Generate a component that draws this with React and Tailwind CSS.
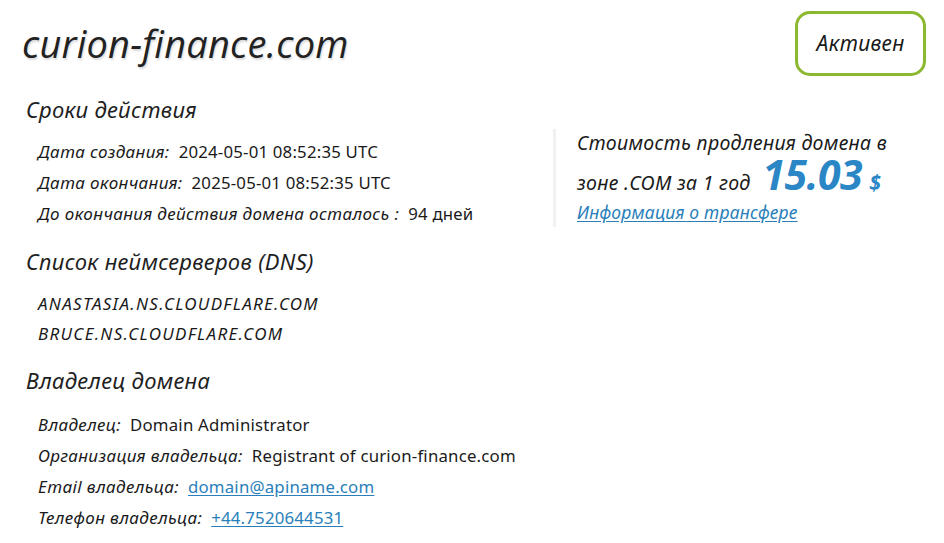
export default function App() {
  const row = "h-[31px] leading-[31px] whitespace-nowrap";
  const label = "italic text-[#1a1a1a] text-[17px] leading-[31px] tracking-[0.4px]";
  const val = "not-italic text-[#1a1a1a] text-[16.8px] leading-[31px] ml-[9px] tracking-[0.2px]";
  const head = "italic text-[#1f1f1f] text-[22px] leading-[30px] h-[30px] tracking-[0.3px]";
  const dns = "h-[30px] leading-[30px]";
  return (
    <div className="w-[944px] h-[543px] bg-white overflow-hidden" style={{ fontFamily: '"Noto Sans", "Open Sans", sans-serif' }}>
      <div className="flex items-start justify-between pl-[22px] pr-[18px] pt-[11px]">
        <h1 className="italic font-medium text-[38px] leading-[44px] mt-[10px] text-[#222] tracking-[0.2px] [text-shadow:1px_2px_2px_rgba(0,0,0,0.15)]" style={{ fontFamily: '"Open Sans", sans-serif' }}>
          curion-finance.com
        </h1>
        <div className="w-[131px] h-[65px] border-[3px] border-[#8cb82f] rounded-[15px] flex items-center justify-center italic text-[21px] tracking-[0.3px] text-[#1a1a1a]">
          Активен
        </div>
      </div>

      <div className="flex pl-[26px] mt-[18px]">
        <div className="w-[527px]">
          <div className={head}>Сроки действия</div>
          <div className="pl-[12px] mt-[12px]">
            <div className={row}><span className={label}>Дата создания:</span><span className={val}>2024-05-01 08:52:35 UTC</span></div>
            <div className={row}><span className={label}>Дата окончания:</span><span className={val}>2025-05-01 08:52:35 UTC</span></div>
            <div className={row}><span className={label}>До окончания действия домена осталось :</span><span className={val}>94 дней</span></div>
          </div>
          <div className={head + " mt-[17px]"}>Список неймсерверов (DNS)</div>
          <div className="pl-[12px] mt-[13px] italic text-[17px] tracking-[1.3px] text-[#1a1a1a]">
            <div className={dns}>ANASTASIA.NS.CLOUDFLARE.COM</div>
            <div className={dns}>BRUCE.NS.CLOUDFLARE.COM</div>
          </div>
          <div className={head + " mt-[16px]"}>Владелец домена</div>
          <div className="pl-[12px] mt-[14px]">
            <div className={row}><span className={label}>Владелец:</span><span className={val}>Domain Administrator</span></div>
            <div className={row}><span className={label}>Организация владельца:</span><span className={val}>Registrant of curion-finance.com</span></div>
            <div className={row}><span className={label}>Email владельца:</span><a href="#" className={val + " text-[#2a7fba] underline underline-offset-2"}>domain@apiname.com</a></div>
            <div className={row}><span className={label}>Телефон владельца:</span><a href="#" className={val + " text-[#2a7fba] underline underline-offset-2"}>+44.7520644531</a></div>
          </div>
        </div>
        <div className="flex mt-[35px] h-[98px]">
          <div className="w-[3px] bg-[#f1f1f1] h-full"></div>
          <div className="pl-[21px]">
            <div className="italic text-[19.5px] leading-[28px] tracking-[0.3px] text-[#1a1a1a]">Стоимость продления домена в</div>
            <div className="flex items-baseline italic text-[19.5px] tracking-[0.3px] text-[#1a1a1a] leading-[34px] mt-[0px]">
              <span>зоне .COM за 1 год</span>
              <span className="ml-[12px] font-bold text-[41px] text-[#2a86c5] leading-[34px] tracking-[-0.5px]">15.03</span>
              <span className="ml-[7px] font-bold text-[21px] text-[#2a86c5]">$</span>
            </div>
            <a href="#" className="block mt-[0px] italic text-[17.5px] leading-[24px] tracking-[0.2px] text-[#2a7fba] underline underline-offset-2">Информация о трансфере</a>
          </div>
        </div>
      </div>
    </div>
  );
}
